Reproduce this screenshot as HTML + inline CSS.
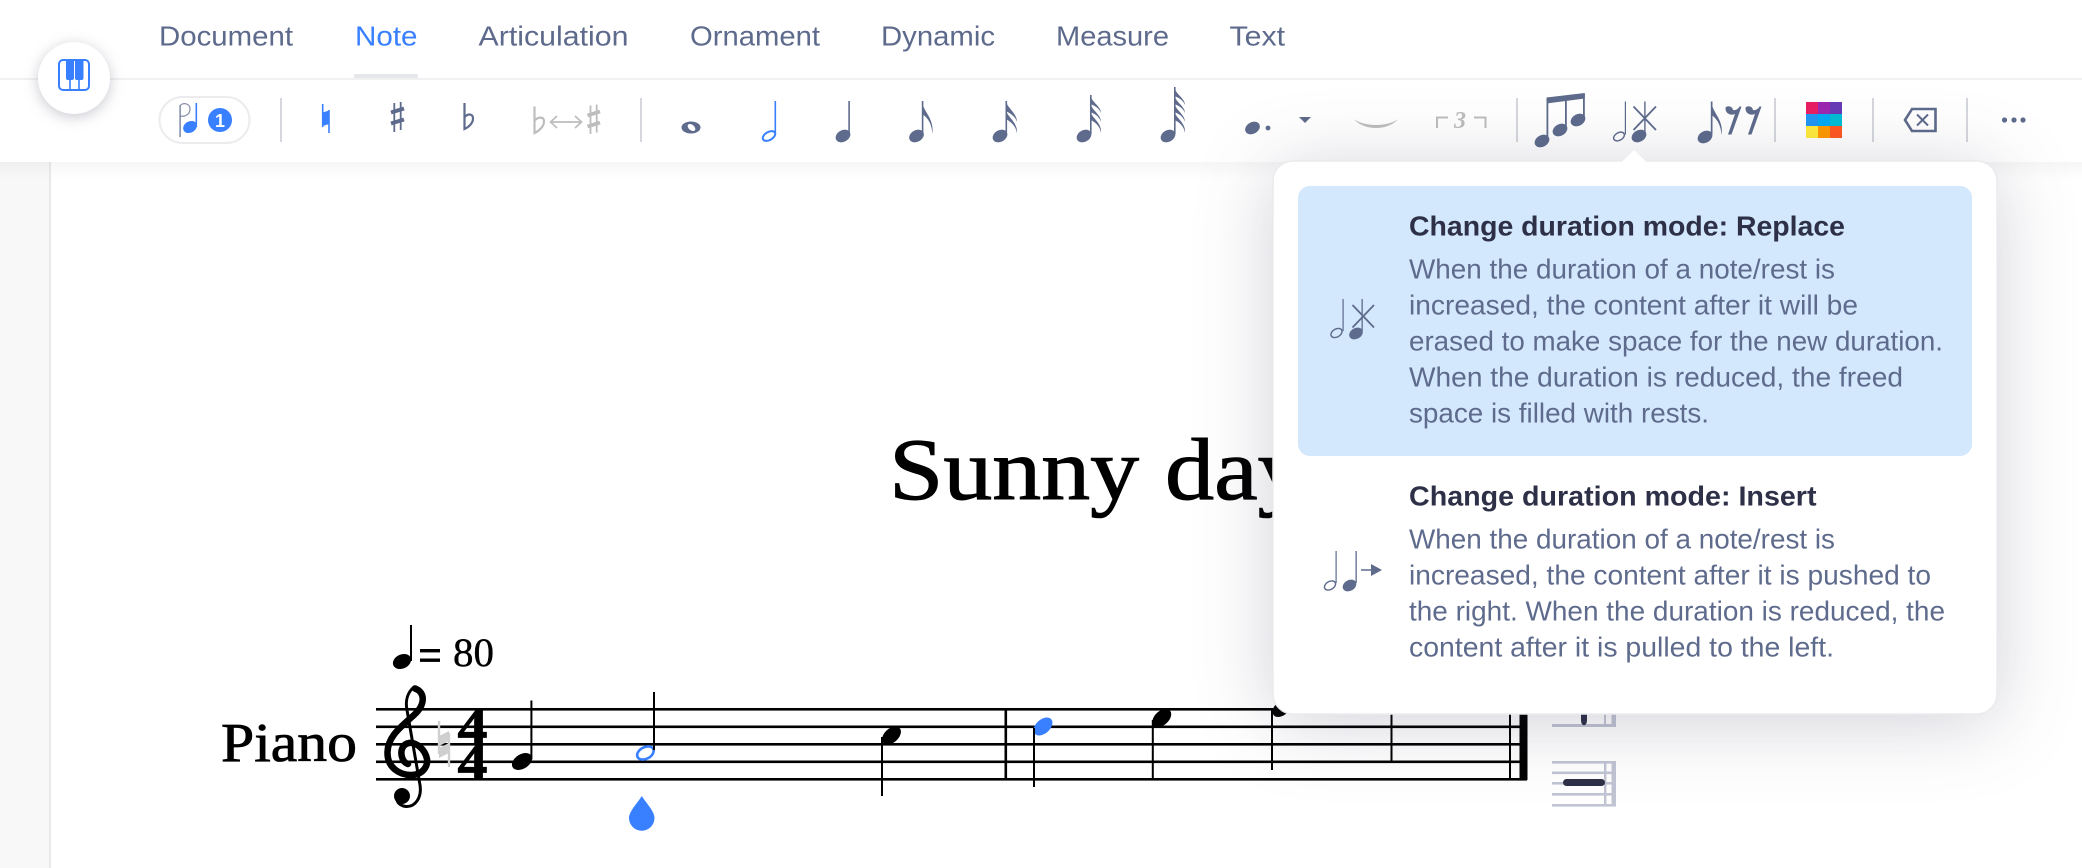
<!DOCTYPE html>
<html><head><meta charset="utf-8"><title>Sunny days</title>
<style>
html,body{margin:0;padding:0;width:2082px;height:868px;overflow:hidden;background:#fff}
svg{display:block;position:absolute;left:0;top:0}
text{font-family:"Liberation Sans",sans-serif}
.tab{font-size:27.5px;fill:#5d6a8c}
.ttl{font-size:27.5px;font-weight:700;fill:#2d3047}
.dsc{font-size:27.5px;fill:#5e6b8c}
.ser{font-family:"Liberation Serif",serif;fill:#000}
</style></head><body>
<svg width="2082" height="868" viewBox="0 0 2082 868" xmlns="http://www.w3.org/2000/svg">
<defs>
<linearGradient id="hs" x1="0" y1="0" x2="0" y2="1"><stop offset="0" stop-color="#000" stop-opacity=".035"/><stop offset="1" stop-color="#000" stop-opacity="0"/></linearGradient>
</defs>
<rect width="2082" height="868" fill="#fff"/>
<rect x="0" y="160" width="49" height="708" fill="#f8f8f9"/>
<rect x="49" y="160" width="2" height="708" fill="#e9e9ec"/>

<!-- Title -->
<text class="ser" x="889" y="499" font-size="88" textLength="250" lengthAdjust="spacingAndGlyphs" stroke="#000" stroke-width="1">Sunny</text>
<text class="ser" x="1165" y="499" font-size="88" textLength="180" lengthAdjust="spacingAndGlyphs" stroke="#000" stroke-width="1">days</text>

<!-- Tempo -->
<ellipse cx="402" cy="661.5" rx="9.5" ry="7" transform="rotate(-25 402 661.5)" fill="#000"/>
<rect x="410" y="625" width="2" height="36" fill="#000"/>
<rect x="420" y="649" width="20" height="3.4" fill="#000"/>
<rect x="420" y="658.5" width="20" height="3.4" fill="#000"/>
<text class="ser" x="453" y="666" font-size="40" textLength="41" lengthAdjust="spacingAndGlyphs" stroke="#000" stroke-width=".4">80</text>
<text class="ser" x="221" y="761" font-size="55" textLength="136" lengthAdjust="spacingAndGlyphs" stroke="#000" stroke-width=".8">Piano</text>

<!-- Staff -->
<g fill="#000">
<rect x="376" y="708" width="1151" height="2.6"/>
<rect x="376" y="725.5" width="1151" height="2.6"/>
<rect x="376" y="743" width="1151" height="2.6"/>
<rect x="376" y="760.5" width="1151" height="2.6"/>
<rect x="376" y="778" width="1151" height="2.6"/>
<rect x="1004.5" y="708" width="2.6" height="72"/>
<rect x="1509" y="708" width="2" height="72"/>
<rect x="1519.5" y="708" width="8" height="72"/>
</g>
<!-- Clef -->
<g fill="none" stroke="#000" stroke-linecap="round">
<path stroke-width="6.500" d="M415 688.500C425 692 426 704 414 715C401 727 388 736 387.500 752C387 768 400 775 411 775C423 775 428 766 427 759C425 749 416 742 409 743C403 744 400 750 402 757C403 761 405 763 408 764"/>
<path stroke-width="3" d="M414 687C408 692 405 700 407 710L420 785C422 798 415 807 406 806.500C402 806 398 804 397 800"/>
</g>
<circle cx="402" cy="796" r="8" fill="#000"/>
<!-- gray natural -->
<path d="M439 721V754M449 733V767" stroke="#cfcfcf" stroke-width="2.4" fill="none"/>
<path d="M439 736L449 731V741L439 746ZM439 748L449 743V753L439 758Z" fill="#cfcfcf"/>
<!-- 4/4 -->
<text class="ser" x="457.500" y="744" font-size="52" font-weight="700" textLength="30" lengthAdjust="spacingAndGlyphs" stroke="#000" stroke-width=".8">4</text>
<text class="ser" x="457.500" y="779" font-size="52" font-weight="700" textLength="30" lengthAdjust="spacingAndGlyphs" stroke="#000" stroke-width=".8">4</text>

<!-- Notes -->
<ellipse cx="522" cy="761.5" rx="11" ry="7.2" transform="rotate(-32 522 761.5)" fill="#000"/>
<rect x="530.4" y="700.5" width="2" height="59" fill="#000"/>
<ellipse cx="645.4" cy="753" rx="8.800" ry="5.800" transform="rotate(-28 645.4 753)" fill="#fff" stroke="#3880ff" stroke-width="2.600"/>
<rect x="653" y="692" width="2" height="58" fill="#000"/>
<path d="M641.8 796C646 803 654.5 811 654.5 818A12.7 12.7 0 0 1 629 818C629 811 637.6 803 641.8 796Z" fill="#3880ff"/>
<ellipse cx="891.5" cy="735.5" rx="11" ry="7" transform="rotate(-42 891.5 735.5)" fill="#000"/>
<rect x="881" y="737" width="2" height="59" fill="#000"/>
<ellipse cx="1043" cy="726.5" rx="11" ry="7" transform="rotate(-42 1043 726.5)" fill="#3880ff"/>
<rect x="1033" y="728" width="2" height="59" fill="#000"/>
<ellipse cx="1161.8" cy="718" rx="11" ry="7" transform="rotate(-42 1161.8 718)" fill="#000"/>
<rect x="1151.8" y="720" width="2" height="58" fill="#000"/>
<ellipse cx="1282" cy="708" rx="11" ry="7" transform="rotate(-42 1282 708)" fill="#000"/>
<rect x="1271" y="708" width="2" height="62" fill="#000"/>
<rect x="1390.5" y="700" width="2" height="62" fill="#000"/>

<!-- Right rest palette -->
<g fill="#c0c4d3">
<rect x="1552" y="724" width="64" height="3"/>
<rect x="1604" y="700" width="2" height="27"/><rect x="1611.500" y="700" width="4.500" height="27"/>
<rect x="1552" y="761" width="64" height="2.600"/>
<rect x="1552" y="771.500" width="64" height="2.600"/>
<rect x="1552" y="782" width="64" height="2.600"/>
<rect x="1552" y="793" width="64" height="2.600"/>
<rect x="1552" y="804" width="64" height="2.600"/>
<rect x="1604" y="761" width="2.400" height="45"/><rect x="1611.500" y="761" width="4.500" height="45"/>
</g>
<path d="M1581 714h6v6c0 7-6 7-6 0z" fill="#2d3047"/>
<rect x="1563" y="779" width="42" height="7" rx="3.5" fill="#2d3047"/>

<!-- Header -->
<rect x="0" y="0" width="2082" height="162" fill="#fff"/>
<rect x="0" y="162" width="2082" height="18" fill="url(#hs)"/>
<rect x="0" y="78" width="2082" height="2" fill="#f1f1f3"/>
<path d="M354 78v-2a2 2 0 0 1 2-2h60a2 2 0 0 1 2 2v2z" fill="#e5e7eb"/>

<text class="tab" x="159" y="45.5" textLength="134" lengthAdjust="spacingAndGlyphs">Document</text>
<text class="tab" x="355" y="45.5" textLength="62.5" lengthAdjust="spacingAndGlyphs" style="fill:#3880ff">Note</text>
<text class="tab" x="478.5" y="45.5" textLength="150" lengthAdjust="spacingAndGlyphs">Articulation</text>
<text class="tab" x="690" y="45.5" textLength="130" lengthAdjust="spacingAndGlyphs">Ornament</text>
<text class="tab" x="881" y="45.5" textLength="114" lengthAdjust="spacingAndGlyphs">Dynamic</text>
<text class="tab" x="1056" y="45.5" textLength="113" lengthAdjust="spacingAndGlyphs">Measure</text>
<text class="tab" x="1229.5" y="45.5" textLength="55.5" lengthAdjust="spacingAndGlyphs">Text</text>

<!-- Piano button -->
<circle cx="74" cy="78" r="36" fill="#fff" style="filter:drop-shadow(0 3px 7px rgba(60,64,90,.28))"/>
<g>
<rect x="59" y="60" width="30" height="30" rx="4" fill="#fff" stroke="#3880ff" stroke-width="2"/>
<path d="M66 60h8v18a2 2 0 0 1-2 2h-4a2 2 0 0 1-2-2zM75 60h8.500v18a2 2 0 0 1-2 2h-4.500a2 2 0 0 1-2-2z" fill="#3880ff"/>
<path d="M70 79V90M79 79V90" stroke="#3880ff" stroke-width="1.600" fill="none"/>
</g>

<!-- Pill -->
<rect x="159.500" y="97" width="90" height="46" rx="23" fill="#fff" stroke="#ececee" stroke-width="2"/>
<rect x="179.500" y="105" width="1.200" height="32" fill="#5e6b8c"/>
<path d="M180 106C182 102 190 103 190 109C190 115 184 117 180.500 116" fill="none" stroke="#8a93ad" stroke-width="1.300"/>
<ellipse cx="190" cy="127" rx="7.200" ry="5.600" transform="rotate(-30 190 127)" fill="#3880ff"/>
<rect x="195.500" y="103" width="1.600" height="24" fill="#3880ff"/>
<circle cx="220" cy="120" r="12" fill="#3880ff"/>
<text x="220" y="127" font-size="18" font-weight="700" fill="#fff" text-anchor="middle">1</text>

<!-- Dividers -->
<g fill="#d5d7dd">
<rect x="280" y="98" width="2" height="44"/>
<rect x="640" y="98" width="2" height="44"/>
<rect x="1516" y="98" width="2" height="44"/>
<rect x="1774" y="98" width="2" height="44"/>
<rect x="1872" y="98" width="2" height="44"/>
<rect x="1966" y="98" width="2" height="44"/>
</g>

<!-- Accidentals -->
<path d="M322.700 104V127M329 110V133" stroke="#3880ff" stroke-width="1.600" fill="none"/>
<path d="M322.700 112.500L329 110.500V124L322.700 126Z" fill="#3880ff"/>
<path d="M394.300 103V132M400.700 102V130" stroke="#5e6b8c" stroke-width="1.800" fill="none"/>
<path d="M391 112.500L404 108.500M391 123.500L404 119.500" stroke="#5e6b8c" stroke-width="4" fill="none"/>
<path d="M464.500 103V129C469 127 473 123 473 118.500C473 113.500 468 113.500 464.500 117" stroke="#5e6b8c" stroke-width="2.200" fill="none"/>
<g stroke="#bdbdbd" fill="none">
<path d="M534.500 106.500V133C539 131 544 126.500 544 121.500C544 116.500 538.500 116.500 534.500 120.500" stroke-width="2.200"/>
<path d="M551 122H581M557 116L550.500 122L557 128M575 116L581.500 122L575 128" stroke-width="1.700"/>
<path d="M590.500 105.500V134M596.700 104.500V132.500" stroke-width="1.800"/>
<path d="M587.500 115.500L600 111.500M587.500 126.500L600 122.500" stroke-width="3.800"/>
</g>

<!-- Durations -->
<g fill="#5e6b8c">
<ellipse cx="691" cy="127.500" rx="9.500" ry="6" />
</g>
<ellipse cx="691.500" cy="127.500" rx="2.800" ry="4.400" transform="rotate(-50 691.500 127.500)" fill="#fff"/>
<ellipse cx="769" cy="136" rx="6.800" ry="4" transform="rotate(-30 769 136)" fill="#fff" stroke="#3880ff" stroke-width="2"/>
<rect x="774.500" y="101" width="1.600" height="33" fill="#3880ff"/>
<g fill="#5e6b8c">
<ellipse cx="843" cy="136" rx="7.800" ry="5.800" transform="rotate(-30 843 136)"/>
<rect x="848.300" y="101" width="1.600" height="33"/>
<ellipse cx="916.500" cy="136" rx="7.800" ry="5.800" transform="rotate(-30 916.500 136)"/>
<rect x="921.800" y="101" width="1.600" height="33"/>
<path d="M922 101C923 112 934 117 932.500 134C931.500 123 928 118 922 114Z"/>
<ellipse cx="1000" cy="136" rx="7.800" ry="5.800" transform="rotate(-30 1000 136)"/>
<rect x="1005.500" y="101" width="1.600" height="33"/>
<path d="M1006 101C1007 108 1017 113 1017 122C1015 116 1011 114 1006 111ZM1006 110C1007 117 1018 122 1017 133.500C1016 126 1011 122 1006 119Z"/>
<ellipse cx="1084" cy="136" rx="7.800" ry="5.800" transform="rotate(-30 1084 136)"/>
<rect x="1090" y="95" width="1.600" height="39"/>
<path d="M1090.500 95C1091 102 1101 106 1101 113C1099 108 1095 106 1090.500 104ZM1090.500 103C1091 110 1101 114 1101 122C1099 116 1095 114 1090.500 112ZM1090.500 111C1091 118 1102 122 1101 133C1100 126 1095 122 1090.500 120Z"/>
<ellipse cx="1168" cy="136" rx="7.800" ry="5.800" transform="rotate(-30 1168 136)"/>
<rect x="1174" y="87" width="1.600" height="47"/>
<path d="M1174.500 87C1175 94 1185 98 1185 105C1183 100 1179 98 1174.500 96ZM1174.500 95C1175 102 1185 106 1185 113C1183 108 1179 106 1174.500 104ZM1174.500 103C1175 110 1185 114 1185 122C1183 116 1179 114 1174.500 112ZM1174.500 111C1175 118 1186 122 1185 133C1184 126 1179 122 1174.500 120Z"/>
<ellipse cx="1252.500" cy="128" rx="7.800" ry="5.800" transform="rotate(-30 1252.500 128)"/>
<circle cx="1268" cy="128" r="2.400"/>
<path d="M1299 117H1311L1305 123Z"/>
</g>

<!-- Slur, triplet -->
<path d="M1354 119C1364 127 1388 127 1398 119C1388 131 1364 131 1354 119Z" fill="#bdbdbd"/>
<path d="M1437 128V117.500H1448M1474 117.500H1485.500V128" fill="none" stroke="#bdbdbd" stroke-width="2"/>
<text class="ser" x="1460" y="128" font-size="24" font-style="italic" font-weight="700" text-anchor="middle" style="fill:#bdbdbd">3</text>

<!-- Beamed -->
<g fill="#5e6b8c">
<ellipse cx="1542" cy="141" rx="7.800" ry="5.800" transform="rotate(-30 1542 141)"/>
<ellipse cx="1560" cy="130" rx="7.800" ry="5.800" transform="rotate(-30 1560 130)"/>
<ellipse cx="1578" cy="120" rx="7.800" ry="5.800" transform="rotate(-30 1578 120)"/>
<rect x="1546.500" y="98" width="1.800" height="41"/>
<rect x="1565" y="96" width="1.800" height="33"/>
<rect x="1583" y="94" width="1.800" height="25"/>
<path d="M1546.500 97.500L1584.800 93V98.500L1546.500 103.500Z"/>
</g>

<!-- Mode icon toolbar -->
<ellipse cx="1619" cy="136.500" rx="5.800" ry="3.800" transform="rotate(-30 1619 136.500)" fill="none" stroke="#5e6b8c" stroke-width="1.400"/>
<rect x="1624.800" y="101.500" width="1.200" height="33" fill="#5e6b8c"/>
<ellipse cx="1639" cy="136" rx="7.800" ry="5.800" transform="rotate(-30 1639 136)" fill="#5e6b8c"/>
<rect x="1644.200" y="101.500" width="1.400" height="33" fill="#5e6b8c"/>
<path d="M1633.500 106.500L1656 130M1656 106.500L1633.500 130" stroke="#5e6b8c" stroke-width="1.800" fill="none"/>

<!-- Note + rests -->
<g fill="#5e6b8c">
<ellipse cx="1705" cy="137" rx="7.800" ry="5.800" transform="rotate(-30 1705 137)"/>
<rect x="1710.800" y="101.500" width="1.700" height="33"/>
<path d="M1711.500 101.500C1712 113 1724 119 1721.500 135C1720.500 124 1717 119 1711.500 115Z"/>
<path d="M1725.500 107.500a4.500 4.500 0 0 1 7.500 2.500c2 .5 5-.5 6.500-3.500h2L1731.500 134.500h-3.500L1735 114c-3 1.500-10 .5-9.500-6.500Z"/>
<path d="M1745.500 107.500a4.500 4.500 0 0 1 7.500 2.500c2 .5 5-.5 6.500-3.500h2L1751.500 134.500h-3.500L1755 114c-3 1.500-10 .5-9.500-6.500Z"/>
</g>

<!-- Colors -->
<rect x="1806" y="102" width="12" height="12" fill="#e91e63"/><rect x="1818" y="102" width="12" height="12" fill="#9c27b0"/><rect x="1830" y="102" width="12" height="12" fill="#673ab7"/>
<rect x="1806" y="114" width="12" height="12" fill="#2196f3"/><rect x="1818" y="114" width="12" height="12" fill="#03a9f4"/><rect x="1830" y="114" width="12" height="12" fill="#00bcd4"/>
<rect x="1806" y="126" width="12" height="12" fill="#ffeb3b"/><rect x="1818" y="126" width="12" height="12" fill="#ff9800"/><rect x="1830" y="126" width="12" height="12" fill="#ff5722"/>

<!-- Backspace -->
<path d="M1912 109H1935.500V131H1912L1905 120Z" fill="none" stroke="#5e6b8c" stroke-width="2.600"/>
<path d="M1917 114.500L1928 125.500M1928 114.500L1917 125.500" stroke="#5e6b8c" stroke-width="2" fill="none"/>
<!-- More -->
<circle cx="2004.500" cy="120" r="2.600" fill="#5e6b8c"/><circle cx="2014" cy="120" r="2.600" fill="#5e6b8c"/><circle cx="2023" cy="120" r="2.600" fill="#5e6b8c"/>

<!-- Popup -->
<rect x="1273" y="161" width="724" height="553" rx="20" fill="#fff" stroke="#ebebed" stroke-width="1.500" style="filter:drop-shadow(0 8px 38px rgba(50,52,80,.22))"/>
<path d="M1621 162.500L1634 150L1647 162.500Z" fill="#fff"/>
<rect x="1298" y="186" width="674" height="270" rx="12" fill="#d3e7fd"/>

<text class="ttl" x="1409" y="235.500" textLength="436" lengthAdjust="spacingAndGlyphs">Change duration mode: Replace</text>
<text class="dsc" x="1409" y="278.500" textLength="426" lengthAdjust="spacingAndGlyphs">When the duration of a note/rest is</text>
<text class="dsc" x="1409" y="314.500" textLength="449" lengthAdjust="spacingAndGlyphs">increased, the content after it will be</text>
<text class="dsc" x="1409" y="350.500" textLength="534" lengthAdjust="spacingAndGlyphs">erased to make space for the new duration.</text>
<text class="dsc" x="1409" y="386.500" textLength="494" lengthAdjust="spacingAndGlyphs">When the duration is reduced, the freed</text>
<text class="dsc" x="1409" y="422.500" textLength="300" lengthAdjust="spacingAndGlyphs">space is filled with rests.</text>

<text class="ttl" x="1409" y="505.500" textLength="407.500" lengthAdjust="spacingAndGlyphs">Change duration mode: Insert</text>
<text class="dsc" x="1409" y="548.500" textLength="426" lengthAdjust="spacingAndGlyphs">When the duration of a note/rest is</text>
<text class="dsc" x="1409" y="584.500" textLength="522" lengthAdjust="spacingAndGlyphs">increased, the content after it is pushed to</text>
<text class="dsc" x="1409" y="620.500" textLength="536" lengthAdjust="spacingAndGlyphs">the right. When the duration is reduced, the</text>
<text class="dsc" x="1409" y="656.500" textLength="425" lengthAdjust="spacingAndGlyphs">content after it is pulled to the left.</text>

<!-- Replace icon -->
<ellipse cx="1336.500" cy="333" rx="6" ry="4" transform="rotate(-30 1336.500 333)" fill="none" stroke="#5e6b8c" stroke-width="1.400"/>
<rect x="1342.500" y="299" width="1.200" height="32" fill="#5e6b8c"/>
<ellipse cx="1356" cy="333.500" rx="7.200" ry="5.400" transform="rotate(-30 1356 333.500)" fill="#5e6b8c"/>
<rect x="1361.500" y="299" width="1.300" height="32" fill="#5e6b8c"/>
<path d="M1352.500 305L1374 327.500M1374 305L1352.500 327.500" stroke="#5e6b8c" stroke-width="1.800" fill="none"/>

<!-- Insert icon -->
<ellipse cx="1330" cy="585.500" rx="6" ry="4" transform="rotate(-30 1330 585.500)" fill="none" stroke="#5e6b8c" stroke-width="1.400"/>
<rect x="1335.500" y="551" width="1.200" height="32" fill="#5e6b8c"/>
<ellipse cx="1349.500" cy="585.500" rx="7.200" ry="5.400" transform="rotate(-30 1349.500 585.500)" fill="#5e6b8c"/>
<rect x="1355.500" y="551" width="1.300" height="32" fill="#5e6b8c"/>
<path d="M1361 570H1373" stroke="#5e6b8c" stroke-width="1.500"/>
<path d="M1371 564L1382 570L1371 576Z" fill="#5e6b8c"/>
</svg>
</body></html>
